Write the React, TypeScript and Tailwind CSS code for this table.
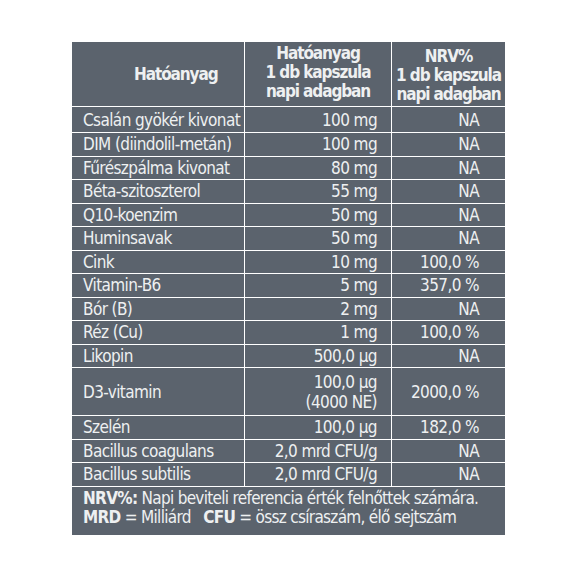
const rows: { name: string; amount: string[]; nrv: string; tall?: boolean }[] = [
  { name: 'Csalán gyökér kivonat', amount: ['100 mg'], nrv: 'NA' },
  { name: 'DIM (diindolil-metán)', amount: ['100 mg'], nrv: 'NA' },
  { name: 'Fűrészpálma kivonat', amount: ['80 mg'], nrv: 'NA' },
  { name: 'Béta-szitoszterol', amount: ['55 mg'], nrv: 'NA' },
  { name: 'Q10-koenzim', amount: ['50 mg'], nrv: 'NA' },
  { name: 'Huminsavak', amount: ['50 mg'], nrv: 'NA' },
  { name: 'Cink', amount: ['10 mg'], nrv: '100,0 %' },
  { name: 'Vitamin-B6', amount: ['5 mg'], nrv: '357,0 %' },
  { name: 'Bór (B)', amount: ['2 mg'], nrv: 'NA' },
  { name: 'Réz (Cu)', amount: ['1 mg'], nrv: '100,0 %' },
  { name: 'Likopin', amount: ['500,0 µg'], nrv: 'NA' },
  { name: 'D3-vitamin', amount: ['100,0 µg', '(4000 NE)'], nrv: '2000,0 %', tall: true },
  { name: 'Szelén', amount: ['100,0 µg'], nrv: '182,0 %' },
  { name: 'Bacillus coagulans', amount: ['2,0 mrd CFU/g'], nrv: 'NA' },
  { name: 'Bacillus subtilis', amount: ['2,0 mrd CFU/g'], nrv: 'NA' },
];

export default function App() {
  return (
    <div className="w-[576px] h-[576px] bg-white pt-[42px] pl-[72px] font-['DejaVu_Sans_Condensed','DejaVu_Sans',sans-serif] text-[#eef0f1]">
      <div className="w-[433px] bg-[#5b636d] text-[17px] leading-[20px] tracking-[-0.6px] whitespace-nowrap">
        {/* header */}
        <div className="flex h-[65px] font-bold border-b border-white tracking-[-1.1px]">
          <div className="w-[173px] border-r border-white flex items-center pl-[62px]">Hatóanyag</div>
          <div className="w-[147px] border-r border-white flex flex-col justify-center items-center leading-[19px] pb-[3px]">
            <span>Hatóanyag</span>
            <span>1 db kapszula</span>
            <span>napi adagban</span>
          </div>
          <div className="flex-1 flex flex-col justify-center items-center leading-[19px] pt-[3px]">
            <span>NRV%</span>
            <span>1 db kapszula</span>
            <span>napi adagban</span>
          </div>
        </div>
        {/* rows */}
        {rows.map((r, i) => (
          <div
            key={r.name}
            className={
              'flex border-b border-white ' +
              (r.tall ? 'h-[48px]' : i === 0 ? 'h-[26px]' : 'h-[23.5px]')
            }
          >
            <div className="w-[173px] border-r border-white flex items-center pl-[11px]">{r.name}</div>
            <div className="w-[147px] border-r border-white flex flex-col justify-center items-end pr-[14px]">
              {r.amount.map((a) => (
                <span key={a}>{a}</span>
              ))}
            </div>
            <div className="flex-1 flex items-center justify-end pr-[26px]">{r.nrv}</div>
          </div>
        ))}
        {/* footer */}
        <div className="h-[48px] pl-[11px] pt-[2px] text-[17px] leading-[19px] tracking-[-0.7px]">
          <div>
            <b>NRV%:</b> Napi beviteli referencia érték felnőttek számára.
          </div>
          <div>
            <b>MRD</b> = Milliárd&nbsp;&nbsp; <b>CFU</b> = össz csíraszám, élő sejtszám
          </div>
        </div>
      </div>
    </div>
  );
}
